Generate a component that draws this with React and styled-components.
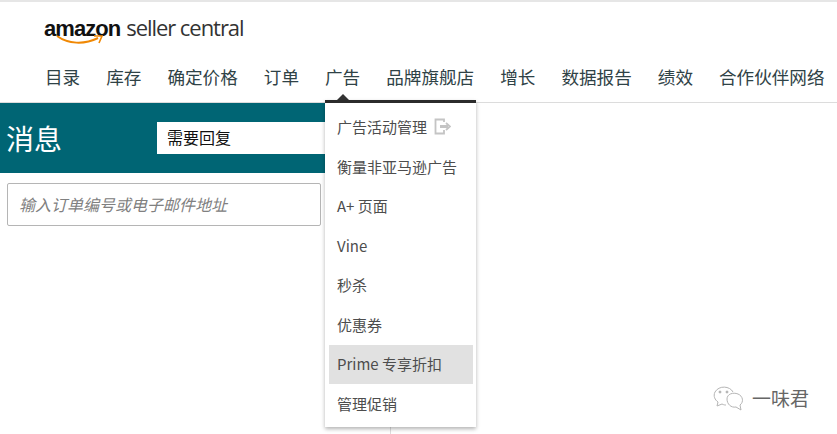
import React from 'react'
import styled, { createGlobalStyle } from 'styled-components'

const CJK = '"Noto Sans CJK SC", "Liberation Sans", sans-serif'

const GlobalStyle = createGlobalStyle`
  html, body {
    margin: 0;
    padding: 0;
    background: #fff;
  }
  body {
    font-family: ${CJK};
    overflow: hidden;
  }
`

const Page = styled.div`
  position: relative;
  width: 837px;
  height: 434px;
  overflow: hidden;
`

const Header = styled.header`
  height: 103px;
  box-sizing: border-box;
  border-top: 2px solid #e6e6e6;
  border-bottom: 1px solid #dcdcdc;
  display: flex;
  flex-direction: column;
`

const LogoRow = styled.div`
  height: 50px;
  padding: 10px 0 0 44px;
  box-sizing: border-box;
`

const Logo = styled.div`
  position: relative;
  display: inline-flex;
  align-items: baseline;
  gap: 6px;
  height: 30px;
  line-height: 30px;
  color: #222;
`

const LogoBrand = styled.span`
  font-family: "Liberation Sans", sans-serif;
  font-size: 22px;
  font-weight: 700;
  letter-spacing: -0.95px;
  color: #111;
`

const LogoProduct = styled.span`
  font-family: "Open Sans", sans-serif;
  font-size: 22px;
  letter-spacing: -1.05px;
  color: #333;
`

const LogoSmile = styled.svg`
  position: absolute;
  left: 12px;
  top: 22px;
`

const Nav = styled.nav`
  display: flex;
  gap: 26px;
  padding-left: 45px;
  height: 50px;
  align-items: flex-start;
`

const NavItem = styled.div`
  position: relative;
  font-size: 17.6px;
  line-height: 26px;
  padding-top: 12px;
  white-space: nowrap;
  color: #2f4246;
`

const NavCaret = styled.span`
  position: absolute;
  left: 50%;
  bottom: -11px;
  margin-left: -7px;
  border-left: 7px solid transparent;
  border-right: 7px solid transparent;
  border-bottom: 7px solid #333;
`

const Menu = styled.div`
  position: absolute;
  left: 325px;
  top: 100px;
  width: 151px;
  height: 327px;
  box-sizing: border-box;
  border-top: 3px solid #2b2b2b;
  background: #fff;
  box-shadow: 0 2px 4px rgba(0, 0, 0, 0.3);
  padding: 4px 3px 0 4px;
  z-index: 2;
`

const MenuItem = styled.div`
  display: flex;
  align-items: center;
  gap: 7px;
  height: 39.5px;
  box-sizing: border-box;
  padding: 0 0 1px 8px;
  font-size: 15px;
  color: #4d4d4d;
  white-space: nowrap;
  border-top: 1px solid transparent;
  background: ${p => (p.$active ? '#e1e1e1' : 'transparent')};
  background-clip: padding-box;
`

const Panel = styled.section`
  width: 390px;
  height: 331px;
  border-right: 1px solid #dddddd;
`

const Band = styled.div`
  height: 70px;
  background: #006574;
  display: flex;
  align-items: center;
  padding-left: 6px;
  box-sizing: border-box;
`

const Title = styled.h1`
  margin: 0;
  width: 151px;
  font-size: 28px;
  font-weight: 400;
  line-height: 36px;
  color: #fff;
`

const Select = styled.div`
  width: 220px;
  height: 32px;
  line-height: 31px;
  padding-left: 10px;
  box-sizing: border-box;
  background: #fff;
  font-size: 16px;
  color: #111;
`

const SearchWrap = styled.div`
  padding: 10px 0 0 7px;
`

const Search = styled.div`
  width: 314px;
  height: 43px;
  line-height: 41px;
  box-sizing: border-box;
  border: 1px solid #b5b5b5;
  border-radius: 2px;
  padding-left: 11px;
  font-size: 16px;
  font-style: italic;
  color: #808080;
`

const Watermark = styled.div`
  position: absolute;
  left: 713px;
  top: 384px;
  display: flex;
  align-items: center;
  gap: 7px;
  font-size: 19px;
  line-height: 28px;
  color: #666;
`

const menuItems = ['广告活动管理', '衡量非亚马逊广告', 'A+ 页面', 'Vine', '秒杀', '优惠券', 'Prime 专享折扣', '管理促销']
const navItems = ['目录', '库存', '确定价格', '订单', '广告', '品牌旗舰店', '增长', '数据报告', '绩效', '合作伙伴网络']

export default function App() {
  return (
    <Page>
      <GlobalStyle />
      <Header>
        <LogoRow>
          <Logo>
            <LogoBrand>amazon</LogoBrand>
            <LogoProduct>seller central</LogoProduct>
            <LogoSmile width="50" height="12" viewBox="0 0 50 12">
              <path d="M1 2 C12 10 28 11 42 4" fill="none" stroke="#f08804" strokeWidth="2" />
              <path d="M38 2 L46 2 L43 9" fill="none" stroke="#f08804" strokeWidth="1.6" />
            </LogoSmile>
          </Logo>
        </LogoRow>
        <Nav>
          {navItems.map(item => (
            <NavItem key={item}>
              {item}
              {item === '广告' && <NavCaret />}
            </NavItem>
          ))}
        </Nav>
      </Header>

      <Panel>
        <Band>
          <Title>消息</Title>
          <Select>需要回复</Select>
        </Band>
        <SearchWrap>
          <Search>输入订单编号或电子邮件地址</Search>
        </SearchWrap>
      </Panel>

      <Menu>
        {menuItems.map((item, i) => (
          <MenuItem key={item} $active={item.startsWith('Prime')}>
            {item}
            {i === 0 && (
              <svg width="17" height="17" viewBox="0 0 17 17" fill="none" stroke="#c4c4c4" strokeWidth="1.8">
                <path d="M10 4 V1.5 H1.5 V15.5 H10 V12" />
                <path d="M6 8.5 H14" strokeWidth="3" />
                <path d="M12 5 L16 8.5 L12 12" />
              </svg>
            )}
          </MenuItem>
        ))}
      </Menu>

      <Watermark>
        <svg width="32" height="27" viewBox="0 0 32 27" fill="none" stroke="#b5b5b5" strokeWidth="1">
          <path d="M20 7 C17 1 6 0 2 7 C0 11 2 15 5 17 L4 21 L9 19 C11 20 12 20 13 20" />
          <path d="M14 14 C14 9 20 7 25 9 C30 11 31 17 27 20 L28 25 L23 22 C18 23 14 19 14 14 Z" />
          <circle cx="7" cy="7" r="1" fill="#aaa" />
          <circle cx="14" cy="7" r="1" fill="#aaa" />
        </svg>
        一味君
      </Watermark>
    </Page>
  )
}
